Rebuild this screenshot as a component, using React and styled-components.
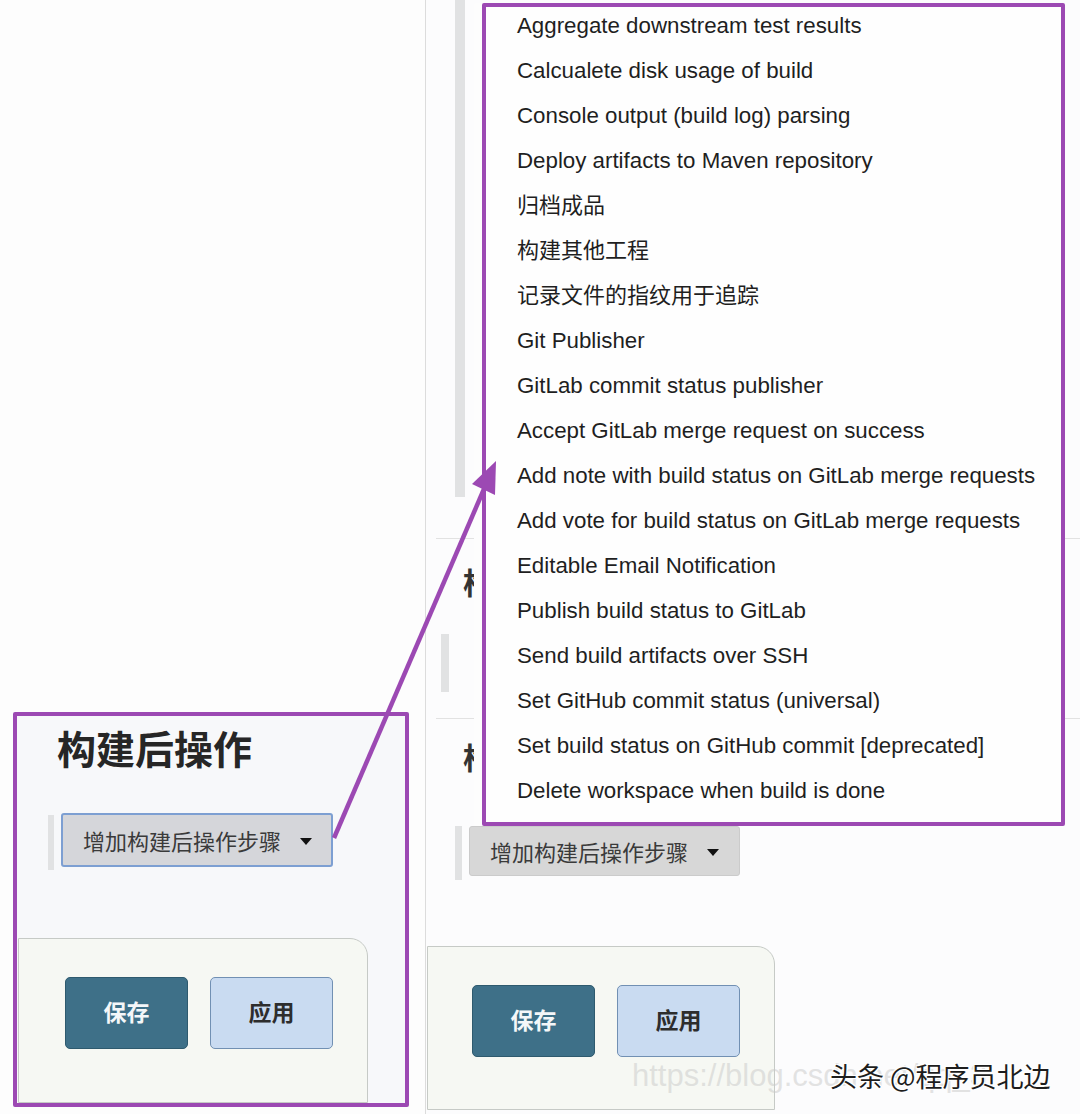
import React from "react";
import styled, { createGlobalStyle } from "styled-components";

const PURPLE = "#9c49b3";
const SANS = `"Liberation Sans", "Noto Sans CJK SC", Arial, sans-serif`;
const CJK = `"Noto Sans CJK SC", "Liberation Sans", sans-serif`;

const GlobalStyle = createGlobalStyle`
  html, body {
    margin: 0;
    padding: 0;
    background: #fdfdfd;
  }
  * {
    box-sizing: border-box;
  }
`;

const Page = styled.div`
  position: relative;
  width: 1080px;
  height: 1114px;
  display: flex;
  overflow: hidden;
  font-family: ${SANS};
  background: #fdfdfd;
`;

/* ---------- left (zoomed) panel ---------- */

const LeftPanel = styled.div`
  width: 425px;
  flex-shrink: 0;
  display: flex;
  flex-direction: column;
  justify-content: flex-end;
  padding: 0 16px 7px 13px;
`;

const Highlight = styled.div`
  height: 395px;
  border: 4px solid ${PURPLE};
  border-radius: 2px;
  background: #f7f8fa;
  display: flex;
  flex-direction: column;
  overflow: hidden;
`;

const BigTitle = styled.div`
  font-family: ${CJK};
  font-size: 39px;
  font-weight: 700;
  line-height: 46px;
  color: #262626;
  padding-left: 40px;
  margin-top: 8px;
`;

const ActionRow = styled.div`
  display: flex;
  align-items: flex-start;
  gap: 7px;
  padding-left: ${(p) => p.$indent}px;
  margin-top: ${(p) => p.$top}px;
`;

const SideBar = styled.div`
  width: ${(p) => p.$w || 6}px;
  height: ${(p) => p.$h}px;
  margin-top: ${(p) => p.$top || 0}px;
  margin-left: ${(p) => p.$left || 0}px;
  background: #e1e2e3;
  flex-shrink: 0;
`;

const DropButton = styled.div`
  position: relative;
  display: flex;
  align-items: center;
  width: ${(p) => p.$w}px;
  height: ${(p) => p.$h}px;
  padding-left: 20px;
  gap: 19px;
  background: ${(p) => (p.$focused ? "#d5d6da" : "#d7d7d7")};
  border: ${(p) => (p.$focused ? "2px solid #7d9fd2" : "1px solid #cbcbcb")};
  border-radius: 3px;
  font-family: ${CJK};
  font-size: 22px;
  color: #3a3a3a;
`;

const Caret = styled.span`
  width: 0;
  height: 0;
  border-left: 6px solid transparent;
  border-right: 6px solid transparent;
  border-top: 7px solid #111;
  margin-top: 2px;
`;

const BottomCard = styled.div`
  width: ${(p) => p.$w}px;
  margin-top: ${(p) => p.$top}px;
  margin-left: ${(p) => p.$left}px;
  height: ${(p) => (p.$h ? `${p.$h}px` : "auto")};
  flex: ${(p) => (p.$h ? "none" : "1")};
  background: #f6f8f3;
  border: 1px solid #c6cac6;
  border-top-right-radius: 18px;
  display: flex;
  align-items: flex-start;
  gap: 22px;
  padding: 38px 0 0 ${(p) => p.$pad}px;
`;

const FormButton = styled.button`
  width: 123px;
  height: 72px;
  padding: 0 0 5px;
  border-radius: 5px;
  font-family: ${CJK};
  font-size: 23px;
  font-weight: 700;
  cursor: pointer;
  background: ${(p) => (p.$primary ? "#3e7088" : "#c9dbf1")};
  color: ${(p) => (p.$primary ? "#f4f7f9" : "#2d2d2d")};
  border: 1px solid ${(p) => (p.$primary ? "#2e5a6e" : "#7190b3")};
`;

/* ---------- right (real size) panel ---------- */

const RightPanel = styled.div`
  flex: 1;
  display: flex;
  flex-direction: column;
  border-left: 1px solid #dcdcdc;
  background: #fcfcfd;
`;

const Block = styled.div`
  height: ${(p) => p.$h}px;
  display: flex;
  flex-direction: column;
  align-items: flex-start;
`;

const Divider = styled.div`
  height: 1px;
  margin-left: 10px;
  background: #e2e2e2;
`;

const SectionTitle = styled.div`
  font-family: ${CJK};
  font-size: 30px;
  font-weight: 700;
  line-height: 36px;
  color: #333;
  padding-left: 37px;
  margin-top: ${(p) => p.$top}px;
  white-space: nowrap;
`;

const Menu = styled.ul`
  position: absolute;
  left: 12px;
  bottom: calc(100% + 1px);
  width: 583px;
  height: 823px;
  margin: 0;
  padding: 0 0 0 31px;
  list-style: none;
  background: #fefefe;
  border: 4px solid ${PURPLE};
  border-radius: 2px;
  box-shadow: -8px 0 0 0 #fdfdfd;
  z-index: 2;
`;

const MenuItem = styled.li`
  height: 45px;
  display: flex;
  align-items: center;
  line-height: 1;
  padding-bottom: ${(p) => (p.$cjk ? 8 : 0)}px;
  font-family: ${(p) => (p.$cjk ? CJK : SANS)};
  font-size: ${(p) => (p.$cjk ? 22 : 22.3)}px;
  color: #1f1f1f;
  white-space: nowrap;
  &:first-child {
    margin-top: -3px;
  }
`;

const Arrow = styled.svg`
  position: absolute;
  left: 0;
  top: 0;
  pointer-events: none;
  z-index: 5;
`;

const Watermark = styled.div`
  position: absolute;
  left: 632px;
  top: 1058px;
  font-family: ${SANS};
  font-size: 31px;
  color: rgba(200, 200, 200, 0.5);
  white-space: nowrap;
  z-index: 6;
`;

const Signature = styled.div`
  position: absolute;
  left: 830px;
  top: 1056px;
  font-family: ${CJK};
  font-size: 27px;
  color: #1d1d1d;
  white-space: nowrap;
  text-shadow: 1px 1px 0 #fff, -1px -1px 0 #fff, 1px -1px 0 #fff, -1px 1px 0 #fff;
  z-index: 7;
`;

const items = [
  "Aggregate downstream test results",
  "Calcualete disk usage of build",
  "Console output (build log) parsing",
  "Deploy artifacts to Maven repository",
  "归档成品",
  "构建其他工程",
  "记录文件的指纹用于追踪",
  "Git Publisher",
  "GitLab commit status publisher",
  "Accept GitLab merge request on success",
  "Add note with build status on GitLab merge requests",
  "Add vote for build status on GitLab merge requests",
  "Editable Email Notification",
  "Publish build status to GitLab",
  "Send build artifacts over SSH",
  "Set GitHub commit status (universal)",
  "Set build status on GitHub commit [deprecated]",
  "Delete workspace when build is done",
];

const isCjk = (s) => /[\u4e00-\u9fff]/.test(s);

export default function App() {
  return (
    <>
      <GlobalStyle />
      <Page>
        <LeftPanel>
          <Highlight>
            <BigTitle>构建后操作</BigTitle>
            <ActionRow $indent={31} $top={43}>
              <SideBar $h={55} $top={2} />
              <DropButton $w={272} $h={54} $focused>
                增加构建后操作步骤
                <Caret />
              </DropButton>
            </ActionRow>
            <BottomCard $w={350} $top={68} $left={1} $pad={46}>
              <FormButton $primary>保存</FormButton>
              <FormButton>应用</FormButton>
            </BottomCard>
          </Highlight>
        </LeftPanel>

        <RightPanel>
          <Block $h={538}>
            <SideBar $w={10} $h={497} $left={29} />
          </Block>
          <Divider />
          <Block $h={179}>
            <SectionTitle $top={24}>构建环境</SectionTitle>
            <SideBar $w={8} $h={58} $top={35} $left={15} />
          </Block>
          <Divider />
          <Block $h={157}>
            <SectionTitle $top={19}>构建</SectionTitle>
            <ActionRow $indent={29} $top={52}>
              <SideBar $w={7} $h={54} />
              <DropButton $w={271} $h={50}>
                <Menu>
                  {items.map((t) => (
                    <MenuItem key={t} $cjk={isCjk(t)}>
                      {t}
                    </MenuItem>
                  ))}
                </Menu>
                增加构建后操作步骤
                <Caret />
              </DropButton>
            </ActionRow>
          </Block>
          <BottomCard $w={348} $h={164} $top={70} $left={1} $pad={44}>
            <FormButton $primary>保存</FormButton>
            <FormButton>应用</FormButton>
          </BottomCard>
        </RightPanel>

        <Arrow width="1080" height="1114" viewBox="0 0 1080 1114">
          <line x1="334" y1="838" x2="487" y2="482" stroke={PURPLE} strokeWidth="4.5" />
          <polygon points="496,461 472,484 495,495" fill={PURPLE} />
        </Arrow>
        <Watermark>https://blog.csdn.net/qq_3</Watermark>
        <Signature>头条 @程序员北边</Signature>
      </Page>
    </>
  );
}
